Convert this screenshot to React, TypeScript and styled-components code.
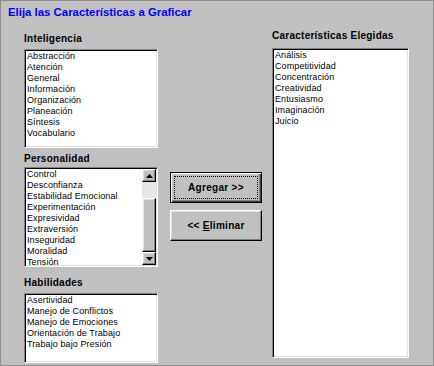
import React from "react";
import styled, { createGlobalStyle, css } from "styled-components";

const GlobalStyle = createGlobalStyle`
  html, body {
    margin: 0;
    padding: 0;
    background: #c0c0c0;
  }
  * {
    box-sizing: border-box;
  }
`;

const Panel = styled.div`
  width: 434px;
  height: 366px;
  background: #c0c0c0;
  border: 1px solid #8c8c8c;
  padding-top: 4px;
  font-family: "Liberation Sans", Arial, sans-serif;
  overflow: hidden;
`;

const Title = styled.div`
  height: 14px;
  line-height: 14px;
  padding-left: 7px;
  font-size: 11.4px;
  font-weight: bold;
  color: #0000ff;
`;

const Body = styled.div`
  display: flex;
`;

const Column = styled.div<{ $top: number; $left: number }>`
  display: flex;
  flex-direction: column;
  padding-top: ${(p) => p.$top}px;
  margin-left: ${(p) => p.$left}px;
`;

const Label = styled.div<{ $gap?: number }>`
  height: 13px;
  line-height: 13px;
  margin-top: ${(p) => p.$gap ?? 0}px;
  font-size: 10px;
  font-weight: bold;
  letter-spacing: 0.25px;
  color: #000;
`;

const sunken = css`
  border-style: solid;
  border-width: 1px;
  border-color: #808080 #ffffff #ffffff #808080;
  box-shadow: inset 1px 1px 0 #000000, inset -1px -1px 0 #dfdfdf;
`;

const raised = css`
  border-style: solid;
  border-width: 1px;
  border-color: #ffffff #000000 #000000 #ffffff;
  box-shadow: inset -1px -1px 0 #808080, inset 1px 1px 0 #dfdfdf;
`;

const ListBox = styled.div<{ $w: number; $h: number; $gap: number }>`
  ${sunken};
  width: ${(p) => p.$w}px;
  height: ${(p) => p.$h}px;
  margin-top: ${(p) => p.$gap}px;
  background: #ffffff;
  padding: 1px 1px;
  display: flex;
  overflow: hidden;
`;

const Items = styled.div`
  flex: 1;
  display: flex;
  flex-direction: column;
  padding-left: 1px;
`;

const Item = styled.div`
  height: 11px;
  line-height: 11px;
  font-size: 9px;
  letter-spacing: 0.1px;
  color: #000;
  white-space: nowrap;
`;

const ScrollBar = styled.div`
  width: 14px;
  display: flex;
  flex-direction: column;
  background: #c0c0c0;
`;

const ScrollButton = styled.div`
  ${raised};
  height: 13px;
  display: flex;
  align-items: center;
  justify-content: center;
  background: #c0c0c0;
`;

const Track = styled.div<{ $h: number }>`
  height: ${(p) => p.$h}px;
  background: #e6e6e6;
`;

const Thumb = styled.div`
  ${raised};
  flex: 1;
  background: #c0c0c0;
`;

const Arrow = ({ down }: { down?: boolean }) => (
  <svg width="7" height="4" viewBox="0 0 7 4">
    <path
      d={down ? "M0 0 H7 L3.5 4 Z" : "M0 4 H7 L3.5 0 Z"}
      fill="#000"
    />
  </svg>
);

const Button = styled.button<{ $default?: boolean; $gap?: number }>`
  width: 92px;
  height: 31px;
  margin-top: ${(p) => p.$gap ?? 0}px;
  padding: 0;
  background: #c0c0c0;
  font-family: "Liberation Sans", Arial, sans-serif;
  font-size: 10px;
  font-weight: bold;
  letter-spacing: 0.3px;
  color: #000;
  display: flex;
  align-items: center;
  justify-content: center;
  cursor: default;
  ${(p) =>
    p.$default
      ? css`
          border: 1px solid #000;
          box-shadow: inset 1px 1px 0 #ffffff, inset -1px -1px 0 #404040,
            inset -2px -2px 0 #808080;
        `
      : raised};
`;

const Focus = styled.span`
  display: flex;
  align-items: center;
  justify-content: center;
  width: 84px;
  height: 23px;
  border: 1px dotted #000;
`;

const inteligencia = [
  "Abstracción",
  "Atención",
  "General",
  "Información",
  "Organización",
  "Planeación",
  "Síntesis",
  "Vocabulario",
];

const personalidad = [
  "Control",
  "Desconfianza",
  "Estabilidad Emocional",
  "Experimentación",
  "Expresividad",
  "Extraversión",
  "Inseguridad",
  "Moralidad",
  "Tensión",
];

const habilidades = [
  "Asertividad",
  "Manejo de Conflictos",
  "Manejo de Emociones",
  "Orientación de Trabajo",
  "Trabajo bajo Presión",
];

const elegidas = [
  "Análisis",
  "Competitividad",
  "Concentración",
  "Creatividad",
  "Entusiasmo",
  "Imaginación",
  "Juicio",
];

const List = ({ items }: { items: string[] }) => (
  <Items>
    {items.map((t) => (
      <Item key={t}>{t}</Item>
    ))}
  </Items>
);

const App = () => (
  <>
    <GlobalStyle />
    <Panel>
      <Title>Elija las Características a Graficar</Title>
      <Body>
        <Column $top={13} $left={23}>
          <Label>Inteligencia</Label>
          <ListBox $w={134} $h={99} $gap={4}>
            <List items={inteligencia} />
          </ListBox>
          <Label $gap={4}>Personalidad</Label>
          <ListBox $w={134} $h={100} $gap={2}>
            <List items={personalidad} />
            <ScrollBar>
              <ScrollButton>
                <Arrow />
              </ScrollButton>
              <Track $h={16} />
              <Thumb />
              <ScrollButton>
                <Arrow down />
              </ScrollButton>
            </ScrollBar>
          </ListBox>
          <Label $gap={9}>Habilidades</Label>
          <ListBox $w={134} $h={70} $gap={4}>
            <List items={habilidades} />
          </ListBox>
        </Column>
        <Column $top={153} $left={12}>
          <Button $default>
            <Focus>Agregar &gt;&gt;</Focus>
          </Button>
          <Button $gap={7}>
            &lt;&lt;&nbsp;<u>E</u>liminar
          </Button>
        </Column>
        <Column $top={10} $left={10}>
          <Label>Características Elegidas</Label>
          <ListBox $w={137} $h={310} $gap={6}>
            <List items={elegidas} />
          </ListBox>
        </Column>
      </Body>
    </Panel>
  </>
);

export default App;
